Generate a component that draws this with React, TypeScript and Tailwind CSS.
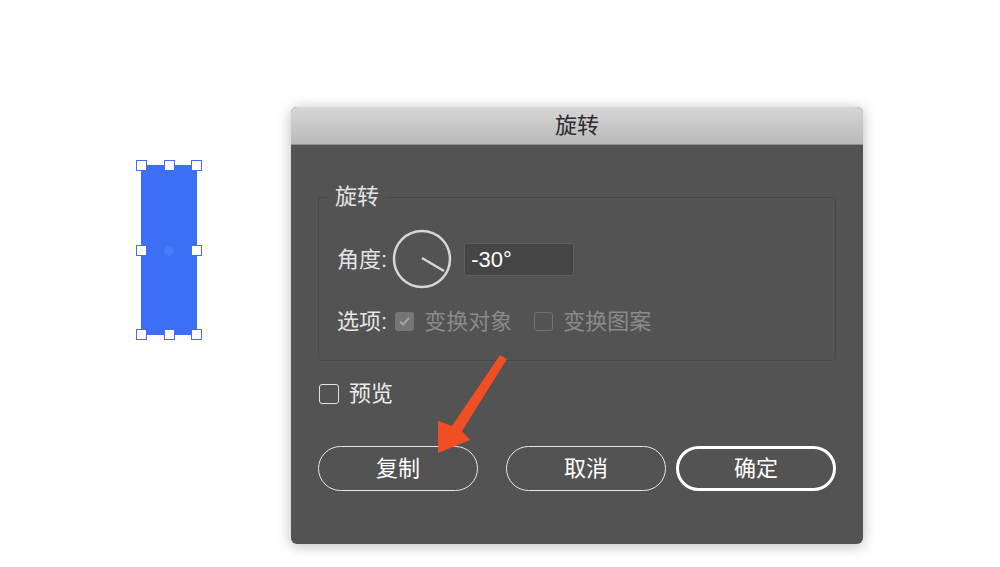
import React from "react";

const cjk = { fontFamily: '"Liberation Sans", "Noto Sans CJK SC", sans-serif' };

function Handle({ className }: { className: string }) {
  return (
    <div
      className={`absolute h-[11px] w-[11px] border-[1.5px] border-[#3d6ff4] bg-white ${className}`}
    />
  );
}

function SelectedRect() {
  return (
    <div className="relative ml-[141px] mt-[165px] h-[170px] w-[56px] bg-[#3c6ff5]">
      <Handle className="-left-[5px] -top-[5px]" />
      <Handle className="left-[23px] -top-[5px]" />
      <Handle className="-right-[5px] -top-[5px]" />
      <Handle className="-left-[5px] top-[80px]" />
      <Handle className="-right-[5px] top-[80px]" />
      <Handle className="-left-[5px] -bottom-[5px]" />
      <Handle className="left-[23px] -bottom-[5px]" />
      <Handle className="-right-[5px] -bottom-[5px]" />
      <div className="absolute left-[23px] top-[81px] h-[10px] w-[10px] rounded-full bg-[#4a7cf7]" />
    </div>
  );
}

function Dial() {
  return (
    <svg width="60" height="60" viewBox="0 0 60 60" className="shrink-0">
      <circle cx="30" cy="30" r="28" fill="none" stroke="#d6d6d6" strokeWidth="2.5" />
      <line x1="30" y1="29" x2="52" y2="42" stroke="#d6d6d6" strokeWidth="2.5" />
    </svg>
  );
}

function Check({ checked, dim }: { checked?: boolean; dim?: boolean }) {
  if (checked) {
    return (
      <span className="flex h-[19px] w-[19px] items-center justify-center rounded-[3px] bg-[#767676]">
        <svg width="13" height="13" viewBox="0 0 13 13">
          <path d="M2 6.8 L5 9.6 L11 3" fill="none" stroke="#a3a3a3" strokeWidth="2" />
        </svg>
      </span>
    );
  }
  return (
    <span
      className={`block h-[19px] w-[19px] rounded-[3px] border-[1.5px] ${
        dim ? "border-[#727272]" : "border-[#e2e2e2]"
      }`}
    />
  );
}

function Btn({ label, primary }: { label: string; primary?: boolean }) {
  return (
    <button
      className={`flex h-[45px] w-[160px] items-center justify-center rounded-full text-[22px] text-white ${
        primary ? "border-[3px] border-white" : "border-[1.5px] border-[#e6e6e6]"
      }`}
    >
      {label}
    </button>
  );
}

function RotateDialog() {
  return (
    <div className="ml-[94px] mt-[107px] flex h-[437px] w-[572px] flex-col overflow-hidden rounded-[6px] bg-[#535353] shadow-[0_2px_14px_rgba(0,0,0,0.28)]">
      <div className="flex h-[38px] shrink-0 items-center justify-center border-b border-[#8f8f8f] bg-gradient-to-b from-[#d6d6d6] to-[#b9b9b9] text-[22px] text-[#2c2c2c]">
        旋转
      </div>
      <div className="flex flex-col px-[27px]">
        <fieldset className="mt-[40px] h-[176px] rounded-[4px] border border-[#474747] p-0 shadow-[0_1px_0_rgba(255,255,255,0.04)]">
          <legend className="ml-[9px] px-[7px] text-[22px] leading-[24px] text-[#e4e4e4]">
            旋转
          </legend>
          <div className="mt-[20px] flex items-center pl-[18px]">
            <span className="text-[22px] text-[#e4e4e4]">角度:</span>
            <span className="ml-[5px]">
              <Dial />
            </span>
            <div className="ml-[12px] flex h-[33px] w-[110px] items-center rounded-[3px] border border-[#5d5d5d] bg-[#454545] px-[6px] text-[22px] text-white">
              -30°
            </div>
          </div>
          <div className="mt-[16px] flex items-center pl-[18px] text-[22px]">
            <span className="text-[#e4e4e4]">选项:</span>
            <span className="ml-[8px]">
              <Check checked />
            </span>
            <span className="ml-[10px] text-[#8a8a8a]">变换对象</span>
            <span className="ml-[22px]">
              <Check dim />
            </span>
            <span className="ml-[10px] text-[#8a8a8a]">变换图案</span>
          </div>
        </fieldset>
        <div className="mt-[16px] flex items-center">
          <span className="ml-px">
            <span className="block h-[20px] w-[20px] rounded-[3px] border-[1.5px] border-[#e2e2e2]" />
          </span>
          <span className="ml-[10px] text-[22px] text-[#ececec]">预览</span>
        </div>
        <div className="mt-[36px] flex">
          <Btn label="复制" />
          <span className="ml-[28px]">
            <Btn label="取消" />
          </span>
          <span className="ml-[10px]">
            <Btn label="确定" primary />
          </span>
        </div>
      </div>
    </div>
  );
}

export default function App() {
  return (
    <div className="relative h-[567px] w-[1000px] overflow-hidden bg-white" style={cjk}>
      <div className="flex items-start">
        <SelectedRect />
        <RotateDialog />
      </div>
      {/* annotation arrow */}
      <svg
        className="pointer-events-none absolute left-0 top-0"
        width="1000"
        height="567"
        viewBox="0 0 1000 567"
      >
        <polygon
          points="500,355 507,359 462,431 470,440 438,453 438,421 452,426"
          fill="#f24e23"
        />
      </svg>
    </div>
  );
}
